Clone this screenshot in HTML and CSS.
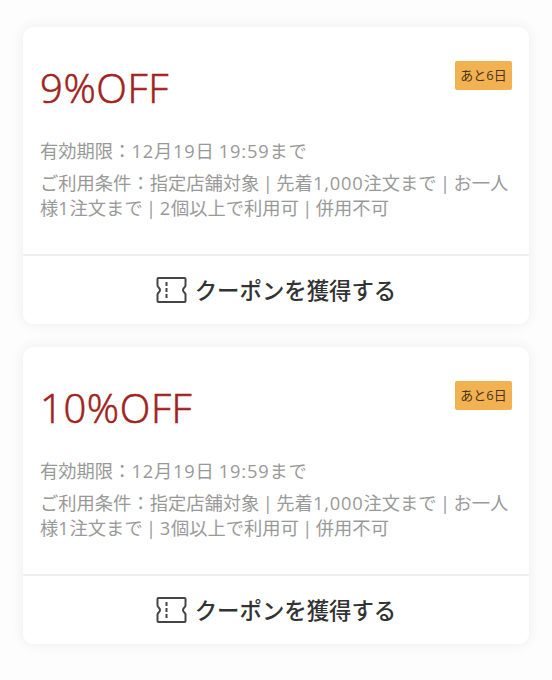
FILE: index.html
```html
<!DOCTYPE html>
<html lang="ja">
<head>
    <meta charset="UTF-8">
    <meta name="viewport" content="width=device-width, initial-scale=1.0">
    <title>クーポン</title>
    <link rel="stylesheet" href="styles.css">
</head>
<body>
    <div class="coupons">
        <div class="coupon">
            <div class="content">
                <div class="top">
                    <h2 class="title">9%OFF</h2>
                    <span class="badge">あと6日</span>
                </div>
                <p class="date">有効期限：<span class="num">12月19日 19:59まで</span></p>
                <p class="terms">ご利用条件：指定店舗対象 | 先着<span class="num">1,000</span>注文まで | お一人<br>様<span class="num">1</span>注文まで | <span class="num">2</span>個以上で利用可 | 併用不可</p>
            </div>
            <button class="get">
                <svg class="ticket" viewBox="0 0 32 28" fill="none" stroke="currentColor" stroke-width="2">
                    <path d="M2.500 2H28.500Q29.500 2 29.500 3V9.500C29.500 11.500 27 11.500 27 14S29.500 16.500 29.500 18.500V25Q29.500 26 28.500 26H2.500Q1.500 26 1.500 25V18.500C1.500 16.500 4 16.500 4 14S1.500 11.500 1.500 9.500V3Q1.500 2 2.500 2Z"/>
                    <path d="M10.500 6V10M10.500 12V16M10.500 18V22"/>
                </svg>
                <span>クーポンを獲得する</span>
            </button>
        </div>
        <div class="coupon">
            <div class="content">
                <div class="top">
                    <h2 class="title">10%OFF</h2>
                    <span class="badge">あと6日</span>
                </div>
                <p class="date">有効期限：<span class="num">12月19日 19:59まで</span></p>
                <p class="terms">ご利用条件：指定店舗対象 | 先着<span class="num">1,000</span>注文まで | お一人<br>様<span class="num">1</span>注文まで | <span class="num">3</span>個以上で利用可 | 併用不可</p>
            </div>
            <button class="get">
                <svg class="ticket" viewBox="0 0 32 28" fill="none" stroke="currentColor" stroke-width="2">
                    <path d="M2.500 2H28.500Q29.500 2 29.500 3V9.500C29.500 11.500 27 11.500 27 14S29.500 16.500 29.500 18.500V25Q29.500 26 28.500 26H2.500Q1.500 26 1.500 25V18.500C1.500 16.500 4 16.500 4 14S1.500 11.500 1.500 9.500V3Q1.500 2 2.500 2Z"/>
                    <path d="M10.500 6V10M10.500 12V16M10.500 18V22"/>
                </svg>
                <span>クーポンを獲得する</span>
            </button>
        </div>
    </div>
</body>
</html>
```
FILE: styles.css
```css
*{
    padding: 0;
    margin: 0;
    box-sizing: border-box;
}
body{
    background: #fefdfd;
    font-family: "Open Sans", "Noto Sans CJK JP", sans-serif;
    font-weight: 400;
}
.coupons{
    display: flex;
    flex-direction: column;
    gap: 23px;
    padding: 27px 23px 36px;
}
.coupon{
    height: 297px;
    display: flex;
    flex-direction: column;
    background: #fff;
    border-radius: 11px;
    box-shadow: 0 0 14px rgba(0, 0, 0, .07);
    overflow: hidden;
}
.content{
    flex: 1;
    padding: 34px 17px 0;
}
.top{
    display: flex;
    justify-content: space-between;
    align-items: flex-start;
    height: 77px;
}
.title{
    font-size: 40px;
    font-weight: 300;
    line-height: 54px;
    letter-spacing: .6px;
    color: #9f221c;
    -webkit-text-stroke: .6px #9f221c;
}
.badge{
    width: 57px;
    height: 29px;
    border-radius: 2px;
    background: #f2b252;
    color: #49351c;
    font-size: 13px;
    line-height: 29px;
    text-align: center;
    white-space: nowrap;
}
.date,
.terms{
    font-size: 18.3px;
    line-height: 25px;
    color: #999;
    white-space: nowrap;
}
.date{
    word-spacing: -1.3px;
}
.terms{
    margin-top: 7px;
    word-spacing: -1.3px;
}
.num{
    letter-spacing: .8px;
}
.get{
    height: 70px;
    display: flex;
    justify-content: center;
    align-items: center;
    gap: 7px;
    padding-bottom: 1px;
    border: none;
    border-top: 2px solid #f0f0f0;
    background: #fff;
    color: #333;
    font-family: inherit;
    font-size: 22.4px;
    font-weight: 500;
}
.ticket{
    width: 32px;
    height: 28px;
    color: #444;
}
```
